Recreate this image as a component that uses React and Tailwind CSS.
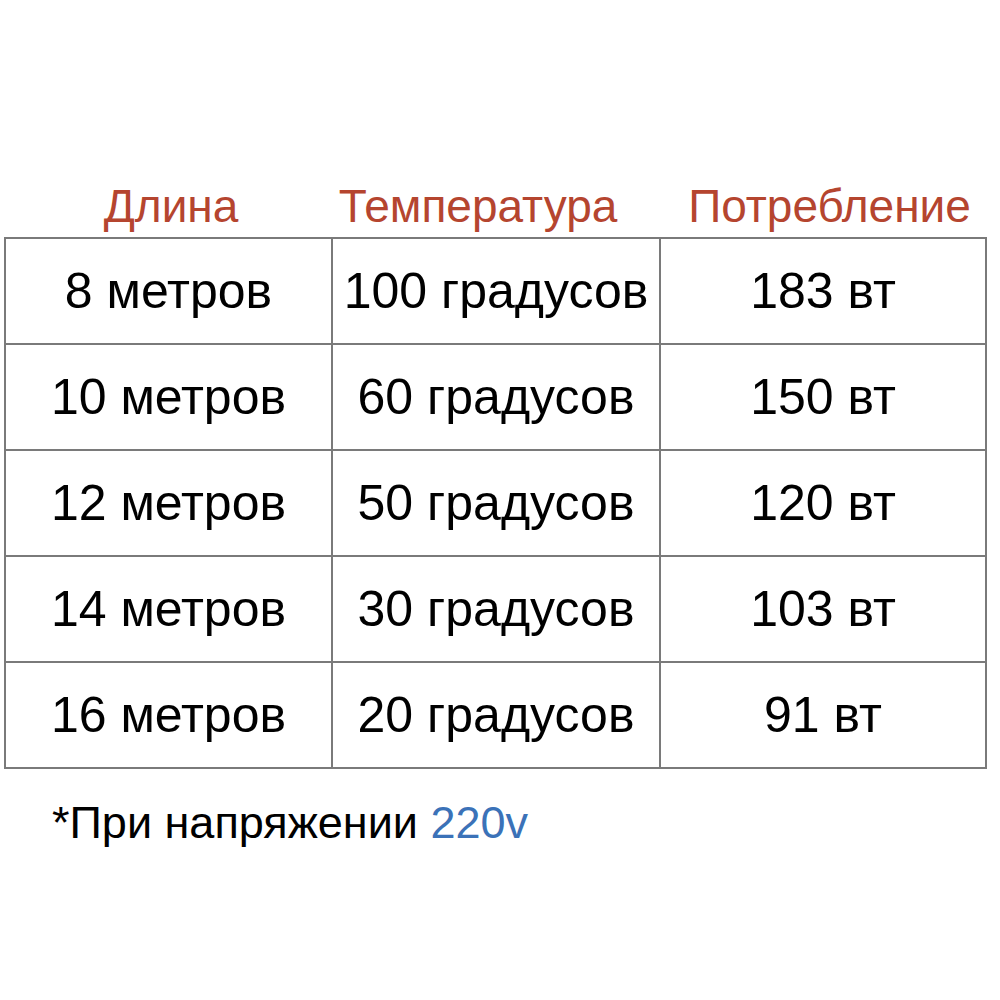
import React from "react";

const rows = [
  ["8 метров", "100 градусов", "183 вт"],
  ["10 метров", "60 градусов", "150 вт"],
  ["12 метров", "50 градусов", "120 вт"],
  ["14 метров", "30 градусов", "103 вт"],
  ["16 метров", "20 градусов", "91 вт"],
];

export default function App() {
  return (
    <div
      className="w-[1000px] h-[1000px] bg-white pt-[175px] pl-[4px]"
      style={{ fontFamily: '"Liberation Sans", Arial, sans-serif' }}
    >
      <div className="grid grid-cols-[328px_328px_325px] text-[46px] leading-[62px] text-[#b5452f] h-[62px]">
        <div className="text-center pl-[6px]">Длина</div>
        <div className="text-center pr-[36px]">Температура</div>
        <div className="text-center pl-[14px]">Потребление</div>
      </div>
      <div className="w-[983px] border-2 border-[#7a7a7a] text-[50px] text-black">
        {rows.map((r, i) => (
          <div
            key={i}
            className={
              "grid grid-cols-[327px_328px_324px] " +
              (i > 0 ? "h-[106px] border-t-2 border-[#7a7a7a]" : "h-[104px]")
            }
          >
            <div className="flex items-center justify-center border-r-2 border-[#7a7a7a]">{r[0]}</div>
            <div className="flex items-center justify-center border-r-2 border-[#7a7a7a]">{r[1]}</div>
            <div className="flex items-center justify-center">{r[2]}</div>
          </div>
        ))}
      </div>
      <div className="pl-[48px] pt-[27px] text-[45px] leading-[54px] text-black">
        *При напряжении <span className="text-[#3b72b8]">220v</span>
      </div>
    </div>
  );
}
